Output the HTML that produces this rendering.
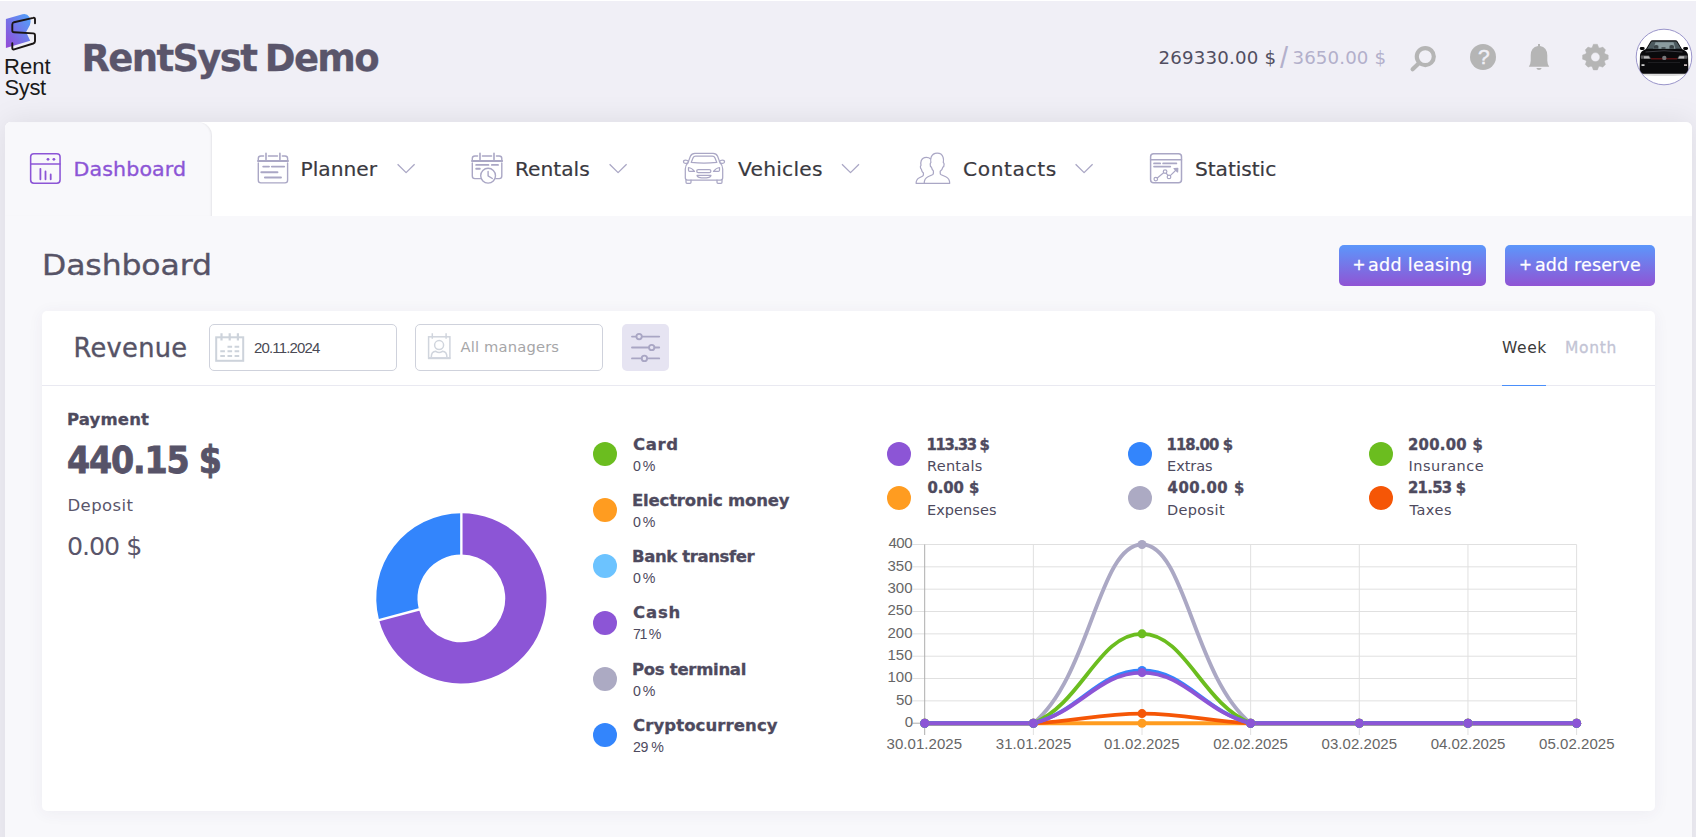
<!DOCTYPE html>
<html lang="en">
<head>
<meta charset="utf-8">
<title>RentSyst Demo - Dashboard</title>
<style>
*{box-sizing:border-box;margin:0;padding:0}
html,body{width:1696px;height:837px;overflow:hidden}
body{background:#f0eff6;font-family:"DejaVu Sans","Liberation Sans",sans-serif;color:#4e4a5e;position:relative}
.a{position:absolute;white-space:nowrap;line-height:1}
svg{position:absolute;overflow:visible}
#panel{position:absolute;left:5px;top:122px;width:1687px;height:740px;background:#f8f8fb;border-radius:6px 6px 0 0;box-shadow:0 0 30px rgba(0,0,0,.085)}
#nav{position:absolute;left:0;top:0;width:100%;height:94px;background:#fff;border-radius:6px 6px 0 0}
#tab{position:absolute;left:0;top:0;width:207px;height:94px;background:#f8f8fb;border-radius:6px 14px 0 0;box-shadow:inset -2px 0 2px -1px rgba(40,40,60,.09)}
#card{position:absolute;left:42px;top:311px;width:1613px;height:500px;background:#fff;border-radius:5px;box-shadow:0 2px 16px rgba(60,50,100,.06)}
#chead{position:absolute;left:0;top:0;width:100%;height:75px;border-bottom:1px solid #e9e9f1}
.inp{position:absolute;top:13px;width:188px;height:47px;border:1px solid #cfd2dc;border-radius:5px;background:#fff}
.btn{position:absolute;top:245px;height:41px;border-radius:5px;background:linear-gradient(180deg,#5c97fb 0%,#9054d4 100%)}
.dot{position:absolute;width:24px;height:24px;border-radius:50%}
.ni{fill:none;stroke:#aaa7c5;stroke-width:1.4;stroke-linecap:round;stroke-linejoin:round}
</style>
</head>
<body>
<!-- ===== HEADER ===== -->
<div class="a" style="left:0;top:0;width:1696px;height:1.3px;background:#fff"></div>
<header id="hdr">
  <svg id="logo" width="60" height="60" style="left:0;top:0" viewBox="0 0 60 60">
    <defs><linearGradient id="lg" x1="1" y1="0" x2="0" y2="1"><stop offset="0" stop-color="#4fa4fb"/><stop offset="1" stop-color="#9548d6"/></linearGradient></defs>
    <path d="M5.9 19 L22.5 14.3 Q27 13.2 29.3 17 Q32.2 22 28.6 27.6 L26.1 32 L30.2 40.8 L5.9 48 Z" fill="url(#lg)"/>
    <path d="M35 23.3 V19.2 Q35 17.4 33.2 17.9 L14 22.2 Q12.3 22.7 12.3 24.4 V30.4 Q12.3 32.2 14.1 32.3 L33.2 33.4 Q35 33.5 35 35.3 V41.2 Q35 42.9 33.3 43.5 L14.2 49.4 Q12.3 50 12.3 48 V43.2" fill="none" stroke="#1b1615" stroke-width="1.9" stroke-linecap="round" stroke-linejoin="round"/>
  </svg>
  <!-- search -->
  <svg width="30" height="30" style="left:1409px;top:43px" viewBox="1409 43 30 30"><circle cx="1425.3" cy="56.6" r="8.5" fill="none" stroke="#b5b5b5" stroke-width="4.2"/><path d="M1418.6 63.4 L1412.6 69.2" stroke="#b5b5b5" stroke-width="4.2" stroke-linecap="round"/></svg>
  <!-- help -->
  <div class="a" style="left:1469.8px;top:43.8px;width:26.2px;height:26.2px;border-radius:50%;background:#b5b5b5"></div>
  <!-- bell -->
  <svg width="24" height="30" style="left:1527px;top:42px" viewBox="1527 42 24 30"><path d="M1538 44.1 h2 v2 q7.3 1.2 7.3 9.5 v5.2 q0 3 1.9 6 h-20.4 q1.9 -3 1.9 -6 v-5.2 q0 -8.3 7.3 -9.5 z M1536.3 67.9 h5.4 q-0.6 2.1 -2.7 2.1 q-2.1 0 -2.7 -2.1 z" fill="#b5b5b5"/></svg>
  <!-- gear -->
  <svg id="gear" width="30" height="30" style="left:1580px;top:42px" viewBox="-15 -15 30 30"><g transform="translate(0.4,0.1)"><path d="M-3.29 -9.55 L-2.03 -12.84 L2.03 -12.84 L3.29 -9.55 A10.1 10.1 0 0 1 4.43 -9.08 L7.35 -10.11 L10.11 -7.35 L9.08 -4.43 A10.1 10.1 0 0 1 9.55 -3.29 L12.84 -2.03 L12.84 2.03 L9.55 3.29 A10.1 10.1 0 0 1 9.08 4.43 L10.11 7.35 L7.35 10.11 L4.43 9.08 A10.1 10.1 0 0 1 3.29 9.55 L2.03 12.84 L-2.03 12.84 L-3.29 9.55 A10.1 10.1 0 0 1 -4.43 9.08 L-7.35 10.11 L-10.11 7.35 L-9.08 4.43 A10.1 10.1 0 0 1 -9.55 3.29 L-12.84 2.03 L-12.84 -2.03 L-9.55 -3.29 A10.1 10.1 0 0 1 -9.08 -4.43 L-10.11 -7.35 L-7.35 -10.11 L-4.43 -9.08 A10.1 10.1 0 0 1 -3.29 -9.55 Z M4.50 0 A4.50 4.50 0 1 0 -4.50 0 A4.50 4.50 0 1 0 4.50 0 Z" fill="#b5b5b5" fill-rule="evenodd" stroke="#b5b5b5" stroke-width="0.4" stroke-linejoin="round"/></g></svg>
  <!-- avatar -->
  <svg id="avatar" width="58" height="58" style="left:1635px;top:28px" viewBox="1635 28 58 58">
    <defs><clipPath id="avc"><circle cx="1664" cy="57" r="27.6"/></clipPath></defs>
    <circle cx="1664" cy="57" r="27.8" fill="#fff" stroke="#8f89c4" stroke-width="0.9"/>
    <g clip-path="url(#avc)">
      <ellipse cx="1664" cy="74.3" rx="24" ry="1.8" fill="#dcdcdc"/>
      <path d="M1646 49 L1650.6 41.2 Q1651.2 40.2 1652.5 40.2 H1675.5 Q1676.8 40.2 1677.4 41.2 L1682 49 Q1687.5 51 1688 55 L1688.4 70 Q1688.4 73.6 1685 73.8 H1643 Q1639.6 73.6 1639.6 70 L1640 55 Q1640.5 51 1646 49 Z" fill="#0a0a0c"/>
      <path d="M1647 48.8 L1651.6 41.6 H1676.4 L1681 48.8 Z" fill="#4d5a5f"/>
      <path d="M1653.500 48.800 L1655.500 42.300 H1673.500 L1675.500 48.800 Z" fill="#8a9b9f"/>
      <path d="M1654 48.800 v-3 q2.200 -1.600 4.400 0 v3 z M1669.500 48.800 v-3 q2.200 -1.600 4.400 0 v3 z M1661.500 48.800 v-1.600 h4 v1.600 z" fill="#3a4347"/>
      <rect x="1639.800" y="46.900" width="4.800" height="3" rx="1.400" fill="#0a0a0c"/><rect x="1683.200" y="46.900" width="4.800" height="3" rx="1.400" fill="#0a0a0c"/>
      <path d="M1640.600 55.600 h8.400 l2 3.200 h-10 z" fill="#5e5e60"/><path d="M1687.600 55.600 h-8.400 l-2 3.200 h10 z" fill="#5e5e60"/>
      <path d="M1644 56.200 h4.600 l1.400 2.200 h-6 z" fill="#b9b9b9"/><path d="M1684.200 56.200 h-4.600 l-1.400 2.200 h6 z" fill="#b9b9b9"/>
      <path d="M1645.500 52 Q1664 49.500 1682.500 52" stroke="#3c3c42" stroke-width="1" fill="none"/>
      <rect x="1651" y="58.400" width="26" height="0.9" fill="#8c1818"/>
      <circle cx="1664.300" cy="57.900" r="2.200" fill="#77777a"/>
      <rect x="1641.500" y="64.300" width="3" height="1.600" fill="#e2e2e2"/><rect x="1684" y="64.300" width="3" height="1.600" fill="#d9c9c9"/>
      <path d="M1648 62.500 H1680" stroke="#1d1d20" stroke-width="1"/>
    </g>
  </svg>
</header>

<!-- ===== MAIN PANEL ===== -->
<div id="panel">
  <nav id="nav"></nav>
  <div id="tab"></div>
</div>

<!-- nav icons -->
<svg width="40" height="40" style="left:25px;top:148px" viewBox="25 148 40 40" fill="none" stroke="#8c55d6" stroke-width="1.55" stroke-linecap="round">
  <rect x="30.65" y="153.65" width="29.4" height="29.6" rx="3.2"/><path d="M30.7 163.9 H60"/>
  <path d="M40.4 168.8 V179.3 M45.5 171.5 V179.3 M50.7 174.4 V179.3" stroke-width="1.8"/>
  <circle cx="48" cy="159.3" r="1.4" fill="#8c55d6" stroke="none"/><circle cx="53.9" cy="159.3" r="1.4" fill="#8c55d6" stroke="none"/>
</svg>
<svg class="ni" width="40" height="40" style="left:252px;top:148px" viewBox="252 148 40 40">
  <path d="M258.3 163 V180.3 Q258.3 182.9 260.9 182.9 H285 Q287.6 182.9 287.6 180.3 V163"/>
  <path d="M258.3 161 V158.6 Q258.3 156 260.9 156 H263.6 M268.4 156 H277.5 M282.3 156 H285 Q287.6 156 287.6 158.6 V161"/>
  <path d="M258 161 H288" stroke-width="1.9"/>
  <path d="M266 153.2 V159.6 M279.9 153.2 V159.6" stroke-width="1.6"/>
  <path d="M263.2 166.6 H269 M271.8 166.6 H284.2 M261.3 172.2 H277.5 M264.9 177.5 H281" stroke-width="1.9"/>
</svg>
<svg class="ni" width="40" height="40" style="left:466px;top:148px" viewBox="466 148 40 40">
  <path d="M472.3 163 V176 Q472.3 178.6 474.9 178.6 H480.4 M495.8 178.6 H499.200 Q501.800 178.6 501.800 176 V163"/>
  <path d="M472.3 161 V158.6 Q472.3 156 474.9 156 H477.6 M482.4 156 H491.6 M496.4 156 H499.200 Q501.800 156 501.800 158.6 V161"/>
  <path d="M472 161 H502.200" stroke-width="1.9"/>
  <path d="M480 153.2 V159.6 M494 153.2 V159.6" stroke-width="1.6"/>
  <path d="M476.2 164.9 H488.4 M491.9 164.9 H498 M476.2 168.8 H479.8" stroke-width="1.9"/>
  <circle cx="488.1" cy="175.7" r="7.4"/>
  <path d="M488.1 171.4 V175.9 L492.3 178.5"/>
</svg>
<svg class="ni" width="52" height="40" style="left:678px;top:148px;stroke-width:1.25" viewBox="678 148 52 40">
  <path d="M694.9 153.4 H713.1 Q716.3 153.4 717.6 156.300 L720 162.600 Q722.7 165.300 722.7 169 V177.800 Q722.7 180.100 720.4 180.100 H687.6 Q685.3 180.100 685.3 177.800 V169 Q685.3 165.300 688 162.600 L690.4 156.300 Q691.7 153.400 694.9 153.400 Z"/>
  <path d="M695.700 156 H712.3 Q714.2 156 714.9 157.800 L716.8 162.400 Q704 163.900 691.2 162.400 L693.100 157.800 Q693.800 156 695.700 156 Z"/>
  <path d="M688 162.900 L686.400 163.300 Q683.500 163.500 683.500 161.800 Q683.500 160.200 685.600 160.200 Q687.600 160.200 688.600 161.600"/>
  <path d="M720 162.900 L721.600 163.300 Q724.500 163.500 724.500 161.800 Q724.500 160.200 722.400 160.200 Q720.400 160.200 719.400 161.600"/>
  <path d="M688.5 167.500 Q691.800 167.800 694.500 171.400 H689.600 Q688.600 171.400 688.500 170.300 Z"/>
  <path d="M719.5 167.500 Q716.200 167.800 713.500 171.400 H718.400 Q719.400 171.400 719.5 170.300 Z"/>
  <rect x="696.700" y="169.500" width="14.2" height="3.2" rx="1.6"/>
  <path d="M697 175.300 H711 Q711 176.800 709 177.300 Q704 178.500 699 177.300 Q697 176.800 697 175.300 Z"/>
  <path d="M686 180.100 V182.300 Q686 183.300 687 183.300 H690 Q691 183.300 691 182.300 V180.100 M717 180.100 V182.300 Q717 183.300 718 183.300 H721 Q722 183.300 722 182.300 V180.100"/>
</svg>
<svg class="ni" width="46" height="40" style="left:910px;top:148px;stroke-width:1.25" viewBox="910 148 46 40">
  <path d="M924.200 183.300 Q924.200 178.500 928 176.800 L932.400 174.800 Q933.400 174.300 933.400 173.300 V170.900 Q932 169.600 931.500 167.300 Q930 166.600 930.200 164.300 Q930.200 163 930.900 162.500 Q930.300 159.300 931.200 157 Q932.700 153.100 937.200 153.100 Q941.700 153.100 943 157 Q943.900 159.300 943.300 162.500 Q944.100 163 944.100 164.300 Q944.200 166.600 942.800 167.300 Q942.300 169.600 940.200 171.300 V173.300 Q940.200 174.300 941.200 174.800 L945.800 176.800 Q949.700 178.500 949.700 183.300 Z"/>
  <path d="M924.200 183.300 H916.100 Q916.100 179.300 919.400 177.700 L922.400 176.200 Q923.400 175.700 923.400 174.700 V173 Q921.800 171.600 921.400 169.300 Q920.300 168.600 920.400 166.800 Q920.400 165.800 921 165.400 Q920.500 162.600 921.300 160.600 Q922.500 157.300 926.400 157.300 Q928.900 157.300 930.300 158.700"/>
</svg>
<svg class="ni" width="44" height="40" style="left:1144px;top:148px;stroke-width:1.5" viewBox="1144 148 44 40">
  <rect x="1150.600" y="153.800" width="30.9" height="29" rx="3"/><path d="M1150.600 159.800 H1181.500"/>
  <path d="M1154 163.400 H1160.200 M1163.100 163.400 H1176.400 M1154 166.600 H1170.300" stroke-width="1.7"/>
  <g stroke-width="1.2"><circle cx="1155.800" cy="179.100" r="1.8"/><circle cx="1165.100" cy="171.600" r="1.8"/><circle cx="1169" cy="176.900" r="1.8"/>
  <path d="M1157.300 178 L1163.600 172.800 M1166.200 173.100 L1167.900 175.400 M1170.300 175.600 L1176.300 169.700"/><path d="M1177.800 168.300 L1177.600 172 L1174.100 168.500 Z" fill="#aaa7c5"/></g>
</svg>
<!-- chevrons -->
<svg class="ni" width="20" height="12" style="left:396px;top:163px;stroke-width:1.3;stroke-linecap:butt" viewBox="396 163 20 12"><path d="M397.600 164.300 L406.100 172.600 L414.600 164.300"/></svg>
<svg class="ni" width="20" height="12" style="left:608px;top:163px;stroke-width:1.3;stroke-linecap:butt" viewBox="608 163 20 12"><path d="M609.600 164.300 L618.100 172.600 L626.600 164.300"/></svg>
<svg class="ni" width="20" height="12" style="left:840px;top:163px;stroke-width:1.3;stroke-linecap:butt" viewBox="840 163 20 12"><path d="M842 164.300 L850.500 172.600 L859 164.300"/></svg>
<svg class="ni" width="20" height="12" style="left:1074px;top:163px;stroke-width:1.3;stroke-linecap:butt" viewBox="1074 163 20 12"><path d="M1075.600 164.300 L1084.100 172.600 L1092.600 164.300"/></svg>

<!-- buttons -->
<div class="btn" style="left:1339px;width:147px"></div>
<div class="btn" style="left:1505px;width:150px"></div>

<!-- ===== CARD ===== -->
<section id="card">
  <div id="chead"></div>
  <div class="inp" style="left:167px"></div>
  <div class="inp" style="left:373px"></div>
  <div class="a" style="left:580px;top:13px;width:47px;height:47px;background:#e6e4f2;border-radius:5px"></div>
</section>
<!-- calendar icon -->
<svg width="32" height="32" style="left:214px;top:332px" viewBox="214 332 32 32" fill="none" stroke="#cdd3db">
  <rect x="216.200" y="337.300" width="27" height="23.5" stroke-width="2"/>
  <path d="M221.500 333.200 V340.600 M229.700 333.200 V340.600 M237.900 333.200 V340.600" stroke-width="2.2"/>
  <path d="M227.500 346.700 h4.600 M234.600 346.700 h4.600 M220.300 351.300 h4.600 M227.500 351.300 h4.600 M234.600 351.300 h4.600 M220.300 356 h4.600 M227.500 356 h4.600 M234.600 356 h4.600" stroke-width="2"/>
</svg>
<!-- manager icon -->
<svg width="28" height="30" style="left:426px;top:332px" viewBox="426 332 28 30" fill="none" stroke="#d0d5dd" stroke-width="1.5">
  <rect x="428.600" y="336.800" width="21.3" height="21.3"/><path d="M428 358.200 H450.500" stroke-width="2"/>
  <path d="M432.300 333.200 V338.700 M446.100 333.200 V338.700"/>
  <circle cx="439.100" cy="345.100" r="4.500"/>
  <path d="M431.300 357 Q431.300 351.600 435.800 351.300 Q439.100 353.900 442.400 351.300 Q446.900 351.600 446.900 357"/>
</svg>
<!-- filter icon -->
<svg width="32" height="28" style="left:630px;top:333px" viewBox="630 333 32 28" fill="none" stroke="#a9a6c4" stroke-width="1.85" stroke-linecap="round">
  <path d="M632 336.600 H636.200 M642 336.600 H659.200 M632 347.500 H648.800 M654.600 347.500 H659.200 M632 358.400 H641.500 M647.300 358.400 H659.200"/>
  <circle cx="639.100" cy="336.600" r="2.700"/><circle cx="651.700" cy="347.500" r="2.700"/><circle cx="644.400" cy="358.400" r="2.700"/>
</svg>
<!-- week underline -->
<div class="a" style="left:1502px;top:384.5px;width:44.3px;height:1.4px;background:#4a8ffb"></div>

<!-- donut -->
<svg id="donut" width="180" height="180" style="left:371px;top:508px" viewBox="371 508 180 180">
<path d="M461.35 513.25 A85.10 85.10 0 1 1 379.06 620.03 L418.90 609.53 A43.90 43.90 0 1 0 461.35 554.45 Z" fill="#8c55d6"/>
<path d="M379.06 620.03 A85.10 85.10 0 0 1 461.35 513.25 L461.35 554.45 A43.90 43.90 0 0 0 418.90 609.53 Z" fill="#3385fc"/>
<path d="M461.35 555.45 L461.35 512.25" stroke="#fff" stroke-width="2.4"/><path d="M419.87 609.28 L378.09 620.29" stroke="#fff" stroke-width="2.4"/>
</svg>

<!-- pie legend dots -->
<div class="dot" style="left:593px;top:442px;background:#6bbd1f"></div>
<div class="dot" style="left:593px;top:498.200px;background:#ff9c20"></div>
<div class="dot" style="left:593px;top:554.400px;background:#6cc3ff"></div>
<div class="dot" style="left:593px;top:610.600px;background:#8c55d6"></div>
<div class="dot" style="left:593px;top:666.800px;background:#acaac3"></div>
<div class="dot" style="left:593px;top:723px;background:#3385fc"></div>
<!-- line legend dots -->
<div class="dot" style="left:887px;top:442px;background:#8c55d6"></div>
<div class="dot" style="left:887px;top:486px;background:#ff9c20"></div>
<div class="dot" style="left:1128px;top:442px;background:#3385fc"></div>
<div class="dot" style="left:1128px;top:486px;background:#acaac3"></div>
<div class="dot" style="left:1369px;top:442px;background:#6bbd1f"></div>
<div class="dot" style="left:1369px;top:486px;background:#f55606"></div>

<!-- line chart -->
<svg id="chart" width="760" height="230" style="left:880px;top:530px" viewBox="880 530 760 230">
<path d="M912.4 700.86 H1576.6" stroke="#e0e0e0" stroke-width="1"/>
<path d="M912.4 678.53 H1576.6" stroke="#e0e0e0" stroke-width="1"/>
<path d="M912.4 656.19 H1576.6" stroke="#e0e0e0" stroke-width="1"/>
<path d="M912.4 633.85 H1576.6" stroke="#e0e0e0" stroke-width="1"/>
<path d="M912.4 611.51 H1576.6" stroke="#e0e0e0" stroke-width="1"/>
<path d="M912.4 589.18 H1576.6" stroke="#e0e0e0" stroke-width="1"/>
<path d="M912.4 566.84 H1576.6" stroke="#e0e0e0" stroke-width="1"/>
<path d="M912.4 544.50 H1576.6" stroke="#e0e0e0" stroke-width="1"/>
<path d="M1033.35 544.5 V735.0" stroke="#e0e0e0" stroke-width="1"/>
<path d="M1142.00 544.5 V735.0" stroke="#e0e0e0" stroke-width="1"/>
<path d="M1250.65 544.5 V735.0" stroke="#e0e0e0" stroke-width="1"/>
<path d="M1359.30 544.5 V735.0" stroke="#e0e0e0" stroke-width="1"/>
<path d="M1467.95 544.5 V735.0" stroke="#e0e0e0" stroke-width="1"/>
<path d="M1576.60 544.5 V735.0" stroke="#e0e0e0" stroke-width="1"/>
<path d="M912.4 723.20 H1576.6" stroke="#adadad" stroke-width="1"/>
<path d="M924.70 544.5 V735.0" stroke="#adadad" stroke-width="1"/>
<path d="M924.70 723.20 C968.16 723.20 989.89 723.20 1033.35 723.20 C1076.81 723.20 1098.54 723.20 1142.00 723.20 C1185.46 723.20 1207.19 723.20 1250.65 723.20 C1294.11 723.20 1315.84 723.20 1359.30 723.20 C1402.76 723.20 1424.49 723.20 1467.95 723.20 C1511.41 723.20 1533.14 723.20 1576.60 723.20" fill="none" stroke="#ff9c20" stroke-width="3.85" stroke-linejoin="round"/>
<path d="M924.70 723.20 C968.16 723.20 989.97 723.20 1033.35 723.20 C1076.89 721.27 1098.54 713.58 1142.00 713.58 C1185.46 713.58 1207.11 721.27 1250.65 723.20 C1294.03 723.20 1315.84 723.20 1359.30 723.20 C1402.76 723.20 1424.49 723.20 1467.95 723.20 C1511.41 723.20 1533.14 723.20 1576.60 723.20" fill="none" stroke="#f55606" stroke-width="3.85" stroke-linejoin="round"/>
<path d="M924.70 723.20 C968.16 723.20 1003.63 723.20 1033.35 723.20 C1090.55 676.16 1098.54 544.50 1142.00 544.50 C1185.46 544.50 1193.45 676.16 1250.65 723.20 C1280.37 723.20 1315.84 723.20 1359.30 723.20 C1402.76 723.20 1424.49 723.20 1467.95 723.20 C1511.41 723.20 1533.14 723.20 1576.60 723.20" fill="none" stroke="#aba8c4" stroke-width="3.85" stroke-linejoin="round"/>
<path d="M924.70 723.20 C968.16 723.20 995.47 723.20 1033.35 723.20 C1082.39 703.03 1098.54 633.85 1142.00 633.85 C1185.46 633.85 1201.61 703.03 1250.65 723.20 C1288.53 723.20 1315.84 723.20 1359.30 723.20 C1402.76 723.20 1424.49 723.20 1467.95 723.20 C1511.41 723.20 1533.14 723.20 1576.60 723.20" fill="none" stroke="#6bbd1f" stroke-width="3.85" stroke-linejoin="round"/>
<path d="M924.70 723.20 C968.16 723.20 992.18 723.20 1033.35 723.20 C1079.10 712.10 1098.54 670.48 1142.00 670.48 C1185.46 670.48 1204.90 712.10 1250.65 723.20 C1291.82 723.20 1315.84 723.20 1359.30 723.20 C1402.76 723.20 1424.49 723.20 1467.95 723.20 C1511.41 723.20 1533.14 723.20 1576.60 723.20" fill="none" stroke="#3385fc" stroke-width="3.85" stroke-linejoin="round"/>
<path d="M924.70 723.20 C968.16 723.20 992.02 723.20 1033.35 723.20 C1078.94 712.58 1098.54 672.57 1142.00 672.57 C1185.46 672.57 1205.06 712.58 1250.65 723.20 C1291.98 723.20 1315.84 723.20 1359.30 723.20 C1402.76 723.20 1424.49 723.20 1467.95 723.20 C1511.41 723.20 1533.14 723.20 1576.60 723.20" fill="none" stroke="#8c55d6" stroke-width="3.85" stroke-linejoin="round"/>
<g fill="#ff9c20"><circle cx="924.70" cy="723.20" r="4.5"/><circle cx="1033.35" cy="723.20" r="4.5"/><circle cx="1142.00" cy="723.20" r="4.5"/><circle cx="1250.65" cy="723.20" r="4.5"/><circle cx="1359.30" cy="723.20" r="4.5"/><circle cx="1467.95" cy="723.20" r="4.5"/><circle cx="1576.60" cy="723.20" r="4.5"/></g>
<g fill="#f55606"><circle cx="924.70" cy="723.20" r="4.5"/><circle cx="1033.35" cy="723.20" r="4.5"/><circle cx="1142.00" cy="713.58" r="4.5"/><circle cx="1250.65" cy="723.20" r="4.5"/><circle cx="1359.30" cy="723.20" r="4.5"/><circle cx="1467.95" cy="723.20" r="4.5"/><circle cx="1576.60" cy="723.20" r="4.5"/></g>
<g fill="#aba8c4"><circle cx="924.70" cy="723.20" r="4.5"/><circle cx="1033.35" cy="723.20" r="4.5"/><circle cx="1142.00" cy="544.50" r="4.5"/><circle cx="1250.65" cy="723.20" r="4.5"/><circle cx="1359.30" cy="723.20" r="4.5"/><circle cx="1467.95" cy="723.20" r="4.5"/><circle cx="1576.60" cy="723.20" r="4.5"/></g>
<g fill="#6bbd1f"><circle cx="924.70" cy="723.20" r="4.5"/><circle cx="1033.35" cy="723.20" r="4.5"/><circle cx="1142.00" cy="633.85" r="4.5"/><circle cx="1250.65" cy="723.20" r="4.5"/><circle cx="1359.30" cy="723.20" r="4.5"/><circle cx="1467.95" cy="723.20" r="4.5"/><circle cx="1576.60" cy="723.20" r="4.5"/></g>
<g fill="#3385fc"><circle cx="924.70" cy="723.20" r="4.5"/><circle cx="1033.35" cy="723.20" r="4.5"/><circle cx="1142.00" cy="670.48" r="4.5"/><circle cx="1250.65" cy="723.20" r="4.5"/><circle cx="1359.30" cy="723.20" r="4.5"/><circle cx="1467.95" cy="723.20" r="4.5"/><circle cx="1576.60" cy="723.20" r="4.5"/></g>
<g fill="#8c55d6"><circle cx="924.70" cy="723.20" r="4.5"/><circle cx="1033.35" cy="723.20" r="4.5"/><circle cx="1142.00" cy="672.57" r="4.5"/><circle cx="1250.65" cy="723.20" r="4.5"/><circle cx="1359.30" cy="723.20" r="4.5"/><circle cx="1467.95" cy="723.20" r="4.5"/><circle cx="1576.60" cy="723.20" r="4.5"/></g>
</svg>

<!-- ===== TEXT ===== -->
<div class="a" id="title" style="left:81.50px;top:40.00px;font-family:'DejaVu Sans','Liberation Sans',sans-serif;font-weight:bold;font-size:37px;letter-spacing:-1.680px;word-spacing:-2.5px;-webkit-text-stroke:0.3px #5a556b;color:#5a556b">RentSyst Demo</div>
<div class="a" id="bal1" style="left:1158.50px;top:49.00px;font-family:'DejaVu Sans','Liberation Sans',sans-serif;font-size:18.2px;letter-spacing:0.180px;color:#514e61">269330.00 $</div>
<div class="a" id="bal2" style="left:1280.00px;top:44.00px;font-family:'Liberation Sans',Arial,sans-serif;font-size:29px;letter-spacing:0.000px;color:#b3b0cb">/</div>
<div class="a" id="bal3" style="left:1292.50px;top:49.00px;font-family:'DejaVu Sans','Liberation Sans',sans-serif;font-size:18.2px;letter-spacing:0.113px;color:#b3b0cb">3650.00 $</div>
<div class="a" id="n0" style="left:73.50px;top:161.00px;font-family:'DejaVu Sans','Liberation Sans',sans-serif;font-size:20.6px;letter-spacing:0.113px;transform:scaleY(0.9);transform-origin:0 0;-webkit-text-stroke:0.35px #8c55d6;color:#8c55d6">Dashboard</div>
<div class="a" id="n1" style="left:300.50px;top:160.00px;font-family:'DejaVu Sans','Liberation Sans',sans-serif;font-size:20.2px;letter-spacing:0.000px;transform:scaleY(0.925);transform-origin:0 0;-webkit-text-stroke:0.2px #3a3940;color:#3a3940">Planner</div>
<div class="a" id="n2" style="left:515.00px;top:160.00px;font-family:'DejaVu Sans','Liberation Sans',sans-serif;font-size:20.2px;letter-spacing:0.000px;transform:scaleY(0.925);transform-origin:0 0;-webkit-text-stroke:0.2px #3a3940;color:#3a3940">Rentals</div>
<div class="a" id="n3" style="left:738.00px;top:160.00px;font-family:'DejaVu Sans','Liberation Sans',sans-serif;font-size:20.2px;letter-spacing:0.257px;transform:scaleY(0.925);transform-origin:0 0;-webkit-text-stroke:0.2px #3a3940;color:#3a3940">Vehicles</div>
<div class="a" id="n4" style="left:963.00px;top:160.00px;font-family:'DejaVu Sans','Liberation Sans',sans-serif;font-size:20.2px;letter-spacing:0.617px;transform:scaleY(0.925);transform-origin:0 0;-webkit-text-stroke:0.2px #3a3940;color:#3a3940">Contacts</div>
<div class="a" id="n5" style="left:1195.00px;top:160.00px;font-family:'DejaVu Sans','Liberation Sans',sans-serif;font-size:20.2px;letter-spacing:-0.067px;transform:scaleY(0.925);transform-origin:0 0;-webkit-text-stroke:0.2px #3a3940;color:#3a3940">Statistic</div>
<div class="a" id="h1" style="left:42.00px;top:251.00px;font-family:'DejaVu Sans','Liberation Sans',sans-serif;font-size:31.5px;letter-spacing:-0.113px;transform:scaleY(0.915);transform-origin:0 0;-webkit-text-stroke:0.4px #565366;color:#565366">Dashboard</div>
<div class="a" id="b1p" style="left:1352.50px;top:258.00px;font-family:'DejaVu Sans','Liberation Sans',sans-serif;font-size:15.5px;letter-spacing:0.000px;-webkit-text-stroke:0.35px #fff;color:#ffffff">+</div>
<div class="a" id="b1" style="left:1368.00px;top:257.00px;font-family:'DejaVu Sans','Liberation Sans',sans-serif;font-size:17.5px;letter-spacing:0.306px;-webkit-text-stroke:0.2px #fff;color:#ffffff">add leasing</div>
<div class="a" id="b2p" style="left:1519.00px;top:258.00px;font-family:'DejaVu Sans','Liberation Sans',sans-serif;font-size:15.5px;letter-spacing:0.000px;-webkit-text-stroke:0.35px #fff;color:#ffffff">+</div>
<div class="a" id="b2" style="left:1535.00px;top:257.00px;font-family:'DejaVu Sans','Liberation Sans',sans-serif;font-size:17.5px;letter-spacing:0.144px;-webkit-text-stroke:0.2px #fff;color:#ffffff">add reserve</div>
<div class="a" id="rev" style="left:73.50px;top:336.00px;font-family:'DejaVu Sans','Liberation Sans',sans-serif;font-size:25.7px;letter-spacing:0.300px;-webkit-text-stroke:0.35px #565366;color:#565366">Revenue</div>
<div class="a" id="date" style="left:254.00px;top:340.00px;font-family:'Liberation Sans',Arial,sans-serif;font-size:15px;letter-spacing:-0.840px;color:#4a4a55">20.11.2024</div>
<div class="a" id="mgr" style="left:460.50px;top:340.00px;font-family:'DejaVu Sans','Liberation Sans',sans-serif;font-size:14.7px;letter-spacing:0.180px;color:#a6a6a8">All managers</div>
<div class="a" id="week" style="left:1502.00px;top:341.00px;font-family:'DejaVu Sans','Liberation Sans',sans-serif;font-size:15.5px;letter-spacing:0.600px;color:#3a3a3a">Week</div>
<div class="a" id="month" style="left:1565.00px;top:341.00px;font-family:'DejaVu Sans','Liberation Sans',sans-serif;font-size:15.5px;letter-spacing:0.675px;-webkit-text-stroke:0.3px #c3c4d5;color:#c3c4d5">Month</div>
<div class="a" id="pay" style="left:67.00px;top:412.00px;font-family:'DejaVu Sans','Liberation Sans',sans-serif;font-weight:bold;font-size:16.5px;letter-spacing:0.150px;-webkit-text-stroke:0.3px #4e4a5e;color:#4e4a5e">Payment</div>
<div class="a" id="big" style="left:67.00px;top:442.00px;font-family:'DejaVu Sans Condensed','DejaVu Sans','Liberation Sans',sans-serif;font-weight:bold;font-size:37px;letter-spacing:-1.183px;-webkit-text-stroke:0.8px #575368;color:#575368">440.15 $</div>
<div class="a" id="dep" style="left:67.50px;top:498.00px;font-family:'DejaVu Sans','Liberation Sans',sans-serif;font-size:16.5px;letter-spacing:0.390px;color:#5a566b">Deposit</div>
<div class="a" id="zero" style="left:67.00px;top:534.00px;font-family:'DejaVu Sans','Liberation Sans',sans-serif;font-size:25.3px;letter-spacing:-1.044px;color:#5a566b">0.00 $</div>
<div class="a" id="pl0" style="left:633.00px;top:437.00px;font-family:'DejaVu Sans','Liberation Sans',sans-serif;font-weight:bold;font-size:16.5px;letter-spacing:0.600px;-webkit-text-stroke:0.3px #4e4a5e;color:#4e4a5e">Card</div>
<div class="a" id="ps0" style="left:633.00px;top:459.00px;font-family:'Liberation Sans',Arial,sans-serif;font-size:14.2px;letter-spacing:-0.990px;color:#4e4a5e">0 %</div>
<div class="a" id="pl1" style="left:632.00px;top:493.00px;font-family:'DejaVu Sans','Liberation Sans',sans-serif;font-weight:bold;font-size:16.5px;letter-spacing:-0.192px;-webkit-text-stroke:0.3px #4e4a5e;color:#4e4a5e">Electronic money</div>
<div class="a" id="ps1" style="left:633.00px;top:515.00px;font-family:'Liberation Sans',Arial,sans-serif;font-size:14.2px;letter-spacing:-0.990px;color:#4e4a5e">0 %</div>
<div class="a" id="pl2" style="left:632.00px;top:549.00px;font-family:'DejaVu Sans','Liberation Sans',sans-serif;font-weight:bold;font-size:16.5px;letter-spacing:-0.390px;-webkit-text-stroke:0.3px #4e4a5e;color:#4e4a5e">Bank transfer</div>
<div class="a" id="ps2" style="left:633.00px;top:571.00px;font-family:'Liberation Sans',Arial,sans-serif;font-size:14.2px;letter-spacing:-0.990px;color:#4e4a5e">0 %</div>
<div class="a" id="pl3" style="left:633.00px;top:605.00px;font-family:'DejaVu Sans','Liberation Sans',sans-serif;font-weight:bold;font-size:16.5px;letter-spacing:0.840px;-webkit-text-stroke:0.3px #4e4a5e;color:#4e4a5e">Cash</div>
<div class="a" id="ps3" style="left:633.00px;top:627.00px;font-family:'Liberation Sans',Arial,sans-serif;font-size:14.2px;letter-spacing:-1.320px;color:#4e4a5e">71 %</div>
<div class="a" id="pl4" style="left:632.00px;top:662.00px;font-family:'DejaVu Sans','Liberation Sans',sans-serif;font-weight:bold;font-size:16.5px;letter-spacing:-0.295px;-webkit-text-stroke:0.3px #4e4a5e;color:#4e4a5e">Pos terminal</div>
<div class="a" id="ps4" style="left:633.00px;top:684.00px;font-family:'Liberation Sans',Arial,sans-serif;font-size:14.2px;letter-spacing:-0.990px;color:#4e4a5e">0 %</div>
<div class="a" id="pl5" style="left:633.00px;top:718.00px;font-family:'DejaVu Sans','Liberation Sans',sans-serif;font-weight:bold;font-size:16.5px;letter-spacing:0.097px;-webkit-text-stroke:0.3px #4e4a5e;color:#4e4a5e">Cryptocurrency</div>
<div class="a" id="ps5" style="left:633.00px;top:740.00px;font-family:'Liberation Sans',Arial,sans-serif;font-size:14.2px;letter-spacing:-0.480px;color:#4e4a5e">29 %</div>
<div class="a" id="la0" style="left:926.50px;top:437.00px;font-family:'DejaVu Sans Condensed','DejaVu Sans','Liberation Sans',sans-serif;font-weight:bold;font-size:16.5px;letter-spacing:-1.363px;-webkit-text-stroke:0.35px #4e4a5e;color:#4e4a5e">113.33 $</div>
<div class="a" id="lb0" style="left:927.00px;top:459.00px;font-family:'DejaVu Sans','Liberation Sans',sans-serif;font-size:14.5px;letter-spacing:0.270px;color:#4e4a5e">Rentals</div>
<div class="a" id="lc0" style="left:927.50px;top:480.00px;font-family:'DejaVu Sans Condensed','DejaVu Sans','Liberation Sans',sans-serif;font-weight:bold;font-size:16.5px;letter-spacing:-0.072px;-webkit-text-stroke:0.35px #4e4a5e;color:#4e4a5e">0.00 $</div>
<div class="a" id="ld0" style="left:927.00px;top:503.00px;font-family:'DejaVu Sans','Liberation Sans',sans-serif;font-size:14.5px;letter-spacing:0.051px;color:#4e4a5e">Expenses</div>
<div class="a" id="la1" style="left:1166.50px;top:437.00px;font-family:'DejaVu Sans Condensed','DejaVu Sans','Liberation Sans',sans-serif;font-weight:bold;font-size:16.5px;letter-spacing:-0.900px;-webkit-text-stroke:0.35px #4e4a5e;color:#4e4a5e">118.00 $</div>
<div class="a" id="lb1" style="left:1167.00px;top:459.00px;font-family:'DejaVu Sans','Liberation Sans',sans-serif;font-size:14.5px;letter-spacing:-0.036px;color:#4e4a5e">Extras</div>
<div class="a" id="lc1" style="left:1167.50px;top:480.00px;font-family:'DejaVu Sans Condensed','DejaVu Sans','Liberation Sans',sans-serif;font-weight:bold;font-size:16.5px;letter-spacing:0.566px;-webkit-text-stroke:0.35px #4e4a5e;color:#4e4a5e">400.00 $</div>
<div class="a" id="ld1" style="left:1167.00px;top:503.00px;font-family:'DejaVu Sans','Liberation Sans',sans-serif;font-size:14.5px;letter-spacing:0.360px;color:#4e4a5e">Deposit</div>
<div class="a" id="la2" style="left:1408.00px;top:437.00px;font-family:'DejaVu Sans Condensed','DejaVu Sans','Liberation Sans',sans-serif;font-weight:bold;font-size:16.5px;letter-spacing:0.283px;-webkit-text-stroke:0.35px #4e4a5e;color:#4e4a5e">200.00 $</div>
<div class="a" id="lb2" style="left:1408.50px;top:459.00px;font-family:'DejaVu Sans','Liberation Sans',sans-serif;font-size:14.5px;letter-spacing:0.495px;color:#4e4a5e">Insurance</div>
<div class="a" id="lc2" style="left:1408.00px;top:480.00px;font-family:'DejaVu Sans Condensed','DejaVu Sans','Liberation Sans',sans-serif;font-weight:bold;font-size:16.5px;letter-spacing:-0.720px;-webkit-text-stroke:0.35px #4e4a5e;color:#4e4a5e">21.53 $</div>
<div class="a" id="ld2" style="left:1409.50px;top:503.00px;font-family:'DejaVu Sans','Liberation Sans',sans-serif;font-size:14.5px;letter-spacing:0.495px;color:#4e4a5e">Taxes</div>
<div class="a" id="lg1" style="left:4.00px;top:56.00px;font-family:'Liberation Sans',Arial,sans-serif;font-size:22px;letter-spacing:0.060px;color:#1a1a1a">Rent</div>
<div class="a" id="lg2" style="left:4.50px;top:77.00px;font-family:'Liberation Sans',Arial,sans-serif;font-size:22px;letter-spacing:-0.360px;color:#1a1a1a">Syst</div>
<div class="a" id="q" style="left:1478.00px;top:46.00px;font-family:'Liberation Sans',Arial,sans-serif;font-size:21px;letter-spacing:0.000px;-webkit-text-stroke:0.45px #f0eff6;color:#f0eff6">?</div>
<div class="a" id="yl0" style="left:904.80px;top:714.00px;font-family:'Liberation Sans',Arial,sans-serif;font-size:15px;letter-spacing:0.000px;color:#666666">0</div>
<div class="a" id="yl1" style="left:896.10px;top:692.00px;font-family:'Liberation Sans',Arial,sans-serif;font-size:15px;letter-spacing:-0.252px;color:#666666">50</div>
<div class="a" id="yl2" style="left:887.40px;top:669.00px;font-family:'Liberation Sans',Arial,sans-serif;font-size:15px;letter-spacing:0.036px;color:#666666">100</div>
<div class="a" id="yl3" style="left:887.40px;top:647.00px;font-family:'Liberation Sans',Arial,sans-serif;font-size:15px;letter-spacing:0.036px;color:#666666">150</div>
<div class="a" id="yl4" style="left:887.40px;top:625.00px;font-family:'Liberation Sans',Arial,sans-serif;font-size:15px;letter-spacing:0.036px;color:#666666">200</div>
<div class="a" id="yl5" style="left:887.40px;top:602.00px;font-family:'Liberation Sans',Arial,sans-serif;font-size:15px;letter-spacing:0.036px;color:#666666">250</div>
<div class="a" id="yl6" style="left:887.40px;top:580.00px;font-family:'Liberation Sans',Arial,sans-serif;font-size:15px;letter-spacing:0.036px;color:#666666">300</div>
<div class="a" id="yl7" style="left:887.40px;top:558.00px;font-family:'Liberation Sans',Arial,sans-serif;font-size:15px;letter-spacing:0.036px;color:#666666">350</div>
<div class="a" id="yl8" style="left:888.40px;top:535.00px;font-family:'Liberation Sans',Arial,sans-serif;font-size:15px;letter-spacing:-0.414px;color:#666666">400</div>
<div class="a" id="xl0" style="left:886.50px;top:736.00px;font-family:'Liberation Sans',Arial,sans-serif;font-size:15px;letter-spacing:0.060px;color:#666666">30.01.2025</div>
<div class="a" id="xl1" style="left:995.75px;top:736.00px;font-family:'Liberation Sans',Arial,sans-serif;font-size:15px;letter-spacing:0.060px;color:#666666">31.01.2025</div>
<div class="a" id="xl2" style="left:1104.00px;top:736.00px;font-family:'Liberation Sans',Arial,sans-serif;font-size:15px;letter-spacing:0.060px;color:#666666">01.02.2025</div>
<div class="a" id="xl3" style="left:1213.25px;top:736.00px;font-family:'Liberation Sans',Arial,sans-serif;font-size:15px;letter-spacing:-0.040px;color:#666666">02.02.2025</div>
<div class="a" id="xl4" style="left:1321.50px;top:736.00px;font-family:'Liberation Sans',Arial,sans-serif;font-size:15px;letter-spacing:0.060px;color:#666666">03.02.2025</div>
<div class="a" id="xl5" style="left:1430.75px;top:736.00px;font-family:'Liberation Sans',Arial,sans-serif;font-size:15px;letter-spacing:-0.040px;color:#666666">04.02.2025</div>
<div class="a" id="xl6" style="left:1539.00px;top:736.00px;font-family:'Liberation Sans',Arial,sans-serif;font-size:15px;letter-spacing:0.060px;color:#666666">05.02.2025</div>
</body>
</html>
